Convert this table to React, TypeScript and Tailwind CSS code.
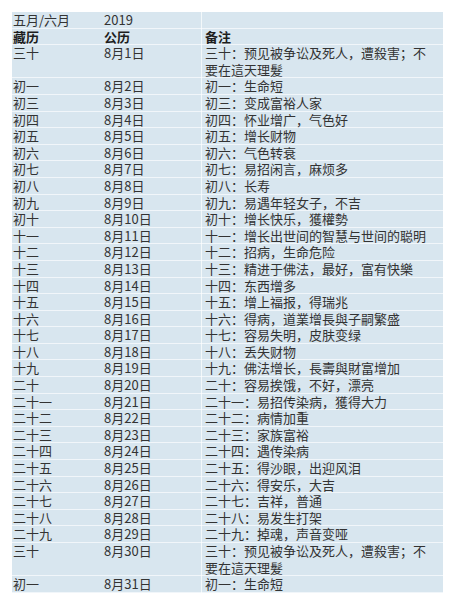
type Row = { a: string; b: string; c: string };

const rows: Row[] = [
  { a: "三十", b: "8月1日", c: "三十：预见被争讼及死人，遭殺害；不要在這天理髮" },
  { a: "初一", b: "8月2日", c: "初一：生命短" },
  { a: "初三", b: "8月3日", c: "初三：变成富裕人家" },
  { a: "初四", b: "8月4日", c: "初四：怀业增广，气色好" },
  { a: "初五", b: "8月5日", c: "初五：增长财物" },
  { a: "初六", b: "8月6日", c: "初六：气色转衰" },
  { a: "初七", b: "8月7日", c: "初七：易招闲言，麻烦多" },
  { a: "初八", b: "8月8日", c: "初八：长寿" },
  { a: "初九", b: "8月9日", c: "初九：易遇年轻女子，不吉" },
  { a: "初十", b: "8月10日", c: "初十：增长快乐，獲權勢" },
  { a: "十一", b: "8月11日", c: "十一：增长出世间的智慧与世间的聪明" },
  { a: "十二", b: "8月12日", c: "十二：招病，生命危险" },
  { a: "十三", b: "8月13日", c: "十三：精进于佛法，最好，富有快樂" },
  { a: "十四", b: "8月14日", c: "十四：东西增多" },
  { a: "十五", b: "8月15日", c: "十五：增上福报，得瑞兆" },
  { a: "十六", b: "8月16日", c: "十六：得病，道業增長與子嗣繁盛" },
  { a: "十七", b: "8月17日", c: "十七：容易失明，皮肤变绿" },
  { a: "十八", b: "8月18日", c: "十八：丢失财物" },
  { a: "十九", b: "8月19日", c: "十九：佛法增长，長壽與財富增加" },
  { a: "二十", b: "8月20日", c: "二十：容易挨饿，不好，漂亮" },
  { a: "二十一", b: "8月21日", c: "二十一：易招传染病，獲得大力" },
  { a: "二十二", b: "8月22日", c: "二十二：病情加重" },
  { a: "二十三", b: "8月23日", c: "二十三：家族富裕" },
  { a: "二十四", b: "8月24日", c: "二十四：遇传染病" },
  { a: "二十五", b: "8月25日", c: "二十五：得沙眼，出迎风泪" },
  { a: "二十六", b: "8月26日", c: "二十六：得安乐，大吉" },
  { a: "二十七", b: "8月27日", c: "二十七：吉祥，普通" },
  { a: "二十八", b: "8月28日", c: "二十八：易发生打架" },
  { a: "二十九", b: "8月29日", c: "二十九：掉魂，声音变哑" },
  { a: "三十", b: "8月30日", c: "三十：预见被争讼及死人，遭殺害；不要在這天理髮" },
  { a: "初一", b: "8月31日", c: "初一：生命短" },
];

const TableRow = ({ a, b, c, bold }: Row & { bold?: boolean }) => {
  return (
    <div
      className={`grid grid-cols-[89px_100px_1fr] shadow-[inset_0_-1px_0_rgba(255,255,255,0.65)] ${
        bold ? "font-bold text-[#1e1e1e]" : ""
      }`}
    >
      <div className="pl-[1px]">{a}</div>
      <div className="pl-[3px]">{b}</div>
      <div className="pl-[3px] pr-[12px] border-l border-white/70">{c}</div>
    </div>
  );
};

export default function App() {
  return (
    <div className="w-[451px] h-[602px] bg-white pt-[12px] pl-[12px]">
      <div
        className="w-[431px] bg-[#d8e6ef] text-[#333] text-[13px] leading-[16.6px]"
        style={{ fontFamily: '"Noto Sans CJK SC", "Liberation Sans", sans-serif' }}
      >
        <TableRow a="五月/六月" b="2019" c="" />
        <TableRow a="藏历" b="公历" c="备注" bold />
        {rows.map((r, i) => (
          <TableRow key={i} {...r} />
        ))}
      </div>
    </div>
  );
}
